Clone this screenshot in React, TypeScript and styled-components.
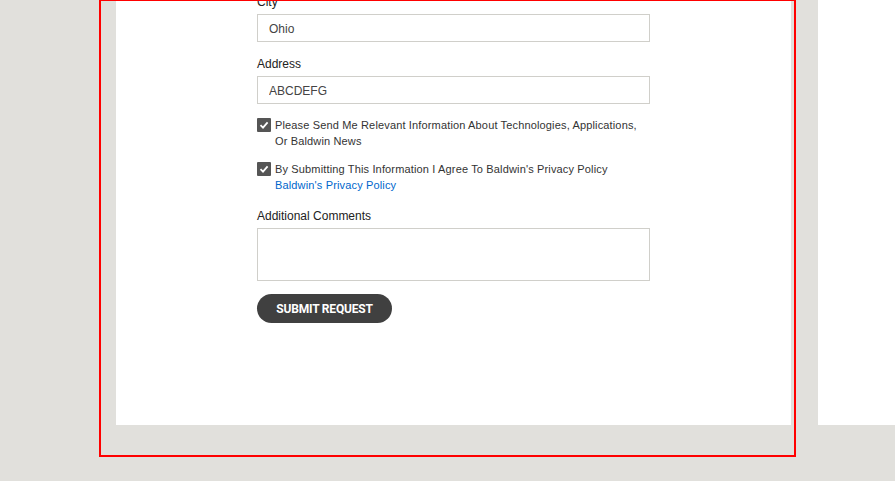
import React from "react";
import styled, { createGlobalStyle } from "styled-components";

const Global = createGlobalStyle`
  html, body { margin: 0; padding: 0; }
  body {
    background: #e1e0dc;
    font-family: "Liberation Sans", Arial, sans-serif;
    color: #333;
    overflow: hidden;
  }
`;

const Page = styled.div`
  position: relative;
  display: flex;
  gap: 27px;
  padding-left: 116px;
  height: 481px;
`;

const Panel = styled.div<{ $w: number }>`
  background: #fff;
  width: ${(p) => p.$w}px;
  height: 425px;
  flex-shrink: 0;
  overflow: hidden;
`;

const Highlight = styled.div`
  position: absolute;
  left: 99px;
  top: -1px;
  width: 693px;
  height: 454px;
  border: 2px solid #ff0000;
  pointer-events: none;
`;

const Form = styled.form`
  display: flex;
  flex-direction: column;
  width: 393px;
  margin: -6px 0 0 141px;
`;

const Field = styled.div<{ $mb: number }>`
  display: flex;
  flex-direction: column;
  margin-bottom: ${(p) => p.$mb}px;
`;

const Label = styled.label`
  font-size: 12px;
  line-height: 14px;
  padding-top: 1px;
  color: #222;
  margin-bottom: 5px;
`;

const Input = styled.input`
  box-sizing: border-box;
  height: 28px;
  width: 100%;
  border: 1px solid #d0cfca;
  padding: 2px 11px 0;
  font-family: "Liberation Sans", Arial, sans-serif;
  font-size: 12px;
  color: #444;
  background: #fff;
  outline: none;
`;

const TextArea = styled.textarea`
  box-sizing: border-box;
  height: 53px;
  width: 100%;
  border: 1px solid #d0cfca;
  resize: none;
  outline: none;
  display: block;
`;

const CheckRow = styled.div<{ $mb: number }>`
  display: flex;
  align-items: flex-start;
  gap: 4px;
  margin-bottom: ${(p) => p.$mb}px;
`;

const Box = styled.span`
  width: 14px;
  height: 14px;
  background: #555;
  border-radius: 1px;
  flex-shrink: 0;
  margin-top: 1px;
  display: flex;
  align-items: center;
  justify-content: center;
`;

const CheckText = styled.div`
  font-size: 11px;
  line-height: 16px;
  letter-spacing: 0.15px;
  color: #333;
`;

const Link = styled.a`
  display: block;
  color: #0066cc;
  text-decoration: none;
`;

const Button = styled.button`
  align-self: flex-start;
  height: 29px;
  width: 135px;
  padding: 0;
  border: none;
  border-radius: 15px;
  background: #404040;
  color: #fff;
  font-family: Roboto, "Liberation Sans", sans-serif;
  font-weight: 700;
  font-size: 12px;
  letter-spacing: -0.2px;
  text-transform: uppercase;
  cursor: pointer;
`;

const Check = () => (
  <Box>
    <svg width="10" height="10" viewBox="0 0 10 10">
      <path d="M1.5 5.2 L4 7.6 L8.6 2.4" fill="none" stroke="#fff" strokeWidth="1.8" />
    </svg>
  </Box>
);

export default function App() {
  return (
    <>
      <Global />
      <Page>
        <Panel $w={675}>
          <Form onSubmit={(e) => e.preventDefault()}>
            <Field $mb={14}>
              <Label>City</Label>
              <Input defaultValue="Ohio" />
            </Field>
            <Field $mb={13}>
              <Label>Address</Label>
              <Input defaultValue="ABCDEFG" />
            </Field>
            <CheckRow $mb={12}>
              <Check />
              <CheckText>
                Please Send Me Relevant Information About Technologies, Applications,
                <br />
                Or Baldwin News
              </CheckText>
            </CheckRow>
            <CheckRow $mb={15}>
              <Check />
              <CheckText>
                By Submitting This Information I Agree To Baldwin's Privacy Policy
                <Link href="#">Baldwin's Privacy Policy</Link>
              </CheckText>
            </CheckRow>
            <Field $mb={13}>
              <Label>Additional Comments</Label>
              <TextArea />
            </Field>
            <Button type="submit">Submit Request</Button>
          </Form>
        </Panel>
        <Panel $w={77} />
        <Highlight />
      </Page>
    </>
  );
}
